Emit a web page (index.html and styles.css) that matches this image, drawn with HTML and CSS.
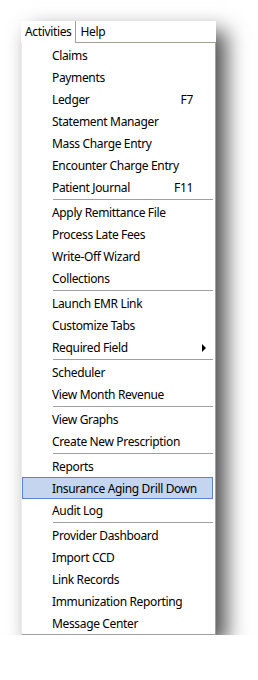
FILE: index.html
```html
<!DOCTYPE html>
<html lang="en">
<head>
    <meta charset="UTF-8">
    <title>Activities menu</title>
    <link rel="stylesheet" href="styles.css">
</head>
<body>
    <div class="frame">
        <div class="menubar">
            <div class="menubar-item open">Activities</div>
            <div class="menubar-item">Help</div>
        </div>

        <ul class="dropdown">
            <li class="item">Claims</li>
            <li class="item">Payments</li>
            <li class="item">Ledger<span class="shortcut">F7</span></li>
            <li class="item">Statement Manager</li>
            <li class="item">Mass Charge Entry</li>
            <li class="item">Encounter Charge Entry</li>
            <li class="item">Patient Journal<span class="shortcut">F11</span></li>
            <li class="sep"></li>
            <li class="item">Apply Remittance File</li>
            <li class="item">Process Late Fees</li>
            <li class="item">Write-Off Wizard</li>
            <li class="item">Collections</li>
            <li class="sep"></li>
            <li class="item">Launch EMR Link</li>
            <li class="item">Customize Tabs</li>
            <li class="item">Required Field<span class="arrow"></span></li>
            <li class="sep"></li>
            <li class="item">Scheduler</li>
            <li class="item">View Month Revenue</li>
            <li class="sep"></li>
            <li class="item">View Graphs</li>
            <li class="item">Create New Prescription</li>
            <li class="sep"></li>
            <li class="item">Reports</li>
            <li class="item active">Insurance Aging Drill Down</li>
            <li class="item">Audit Log</li>
            <li class="sep"></li>
            <li class="item">Provider Dashboard</li>
            <li class="item">Import CCD</li>
            <li class="item">Link Records</li>
            <li class="item">Immunization Reporting</li>
            <li class="item">Message Center</li>
        </ul>
    </div>
</body>
</html>
```

FILE: styles.css
```css
body {
    margin: 0;
    background: #fff;
    font-family: "Noto Sans", "Open Sans", sans-serif;
    font-size: 12px;
    letter-spacing: -0.35px;
    color: #000;
}
.frame {
    width: 195px;
    margin: 21px 0 0 21px;
    background: #fff;
    box-shadow: 10px 10px 20px rgba(0, 0, 0, 0.7);
}
.menubar {
    display: flex;
    height: 21px;
    border-bottom: 1px solid #a09f94;
}
.menubar-item {
    padding: 0 5px;
    line-height: 21px;
}
.menubar-item.open {
    position: relative;
    padding: 0 3px 0 4px;
    border-right: 1px solid #a09f94;
    margin-bottom: -1px;
    height: 22px;
    background: #fff;
}
.dropdown {
    list-style: none;
    margin: 0;
    padding: 1px 1px 0 0;
    border-left: 1px solid #ececec;
    border-right: 1px solid #a0a0a0;
    border-bottom: 1px solid #a0a0a0;
}
.item {
    position: relative;
    display: flex;
    align-items: center;
    height: 22px;
    padding-left: 30px;
    padding-right: 21px;
    white-space: nowrap;
}
.item.active {
    background: #c5d5ef;
    border: 1px solid #5b83cf;
    height: 20px;
    padding-left: 29px;
    margin-right: 1px;
}
.shortcut {
    margin-left: auto;
}
.arrow {
    position: absolute;
    right: 8px;
    top: 8px;
    border-left: 4px solid #000;
    border-top: 4px solid transparent;
    border-bottom: 4px solid transparent;
}
.sep {
    height: 1px;
    margin: 1px 1px 1px 31px;
    background: #a0a0a0;
}
```
